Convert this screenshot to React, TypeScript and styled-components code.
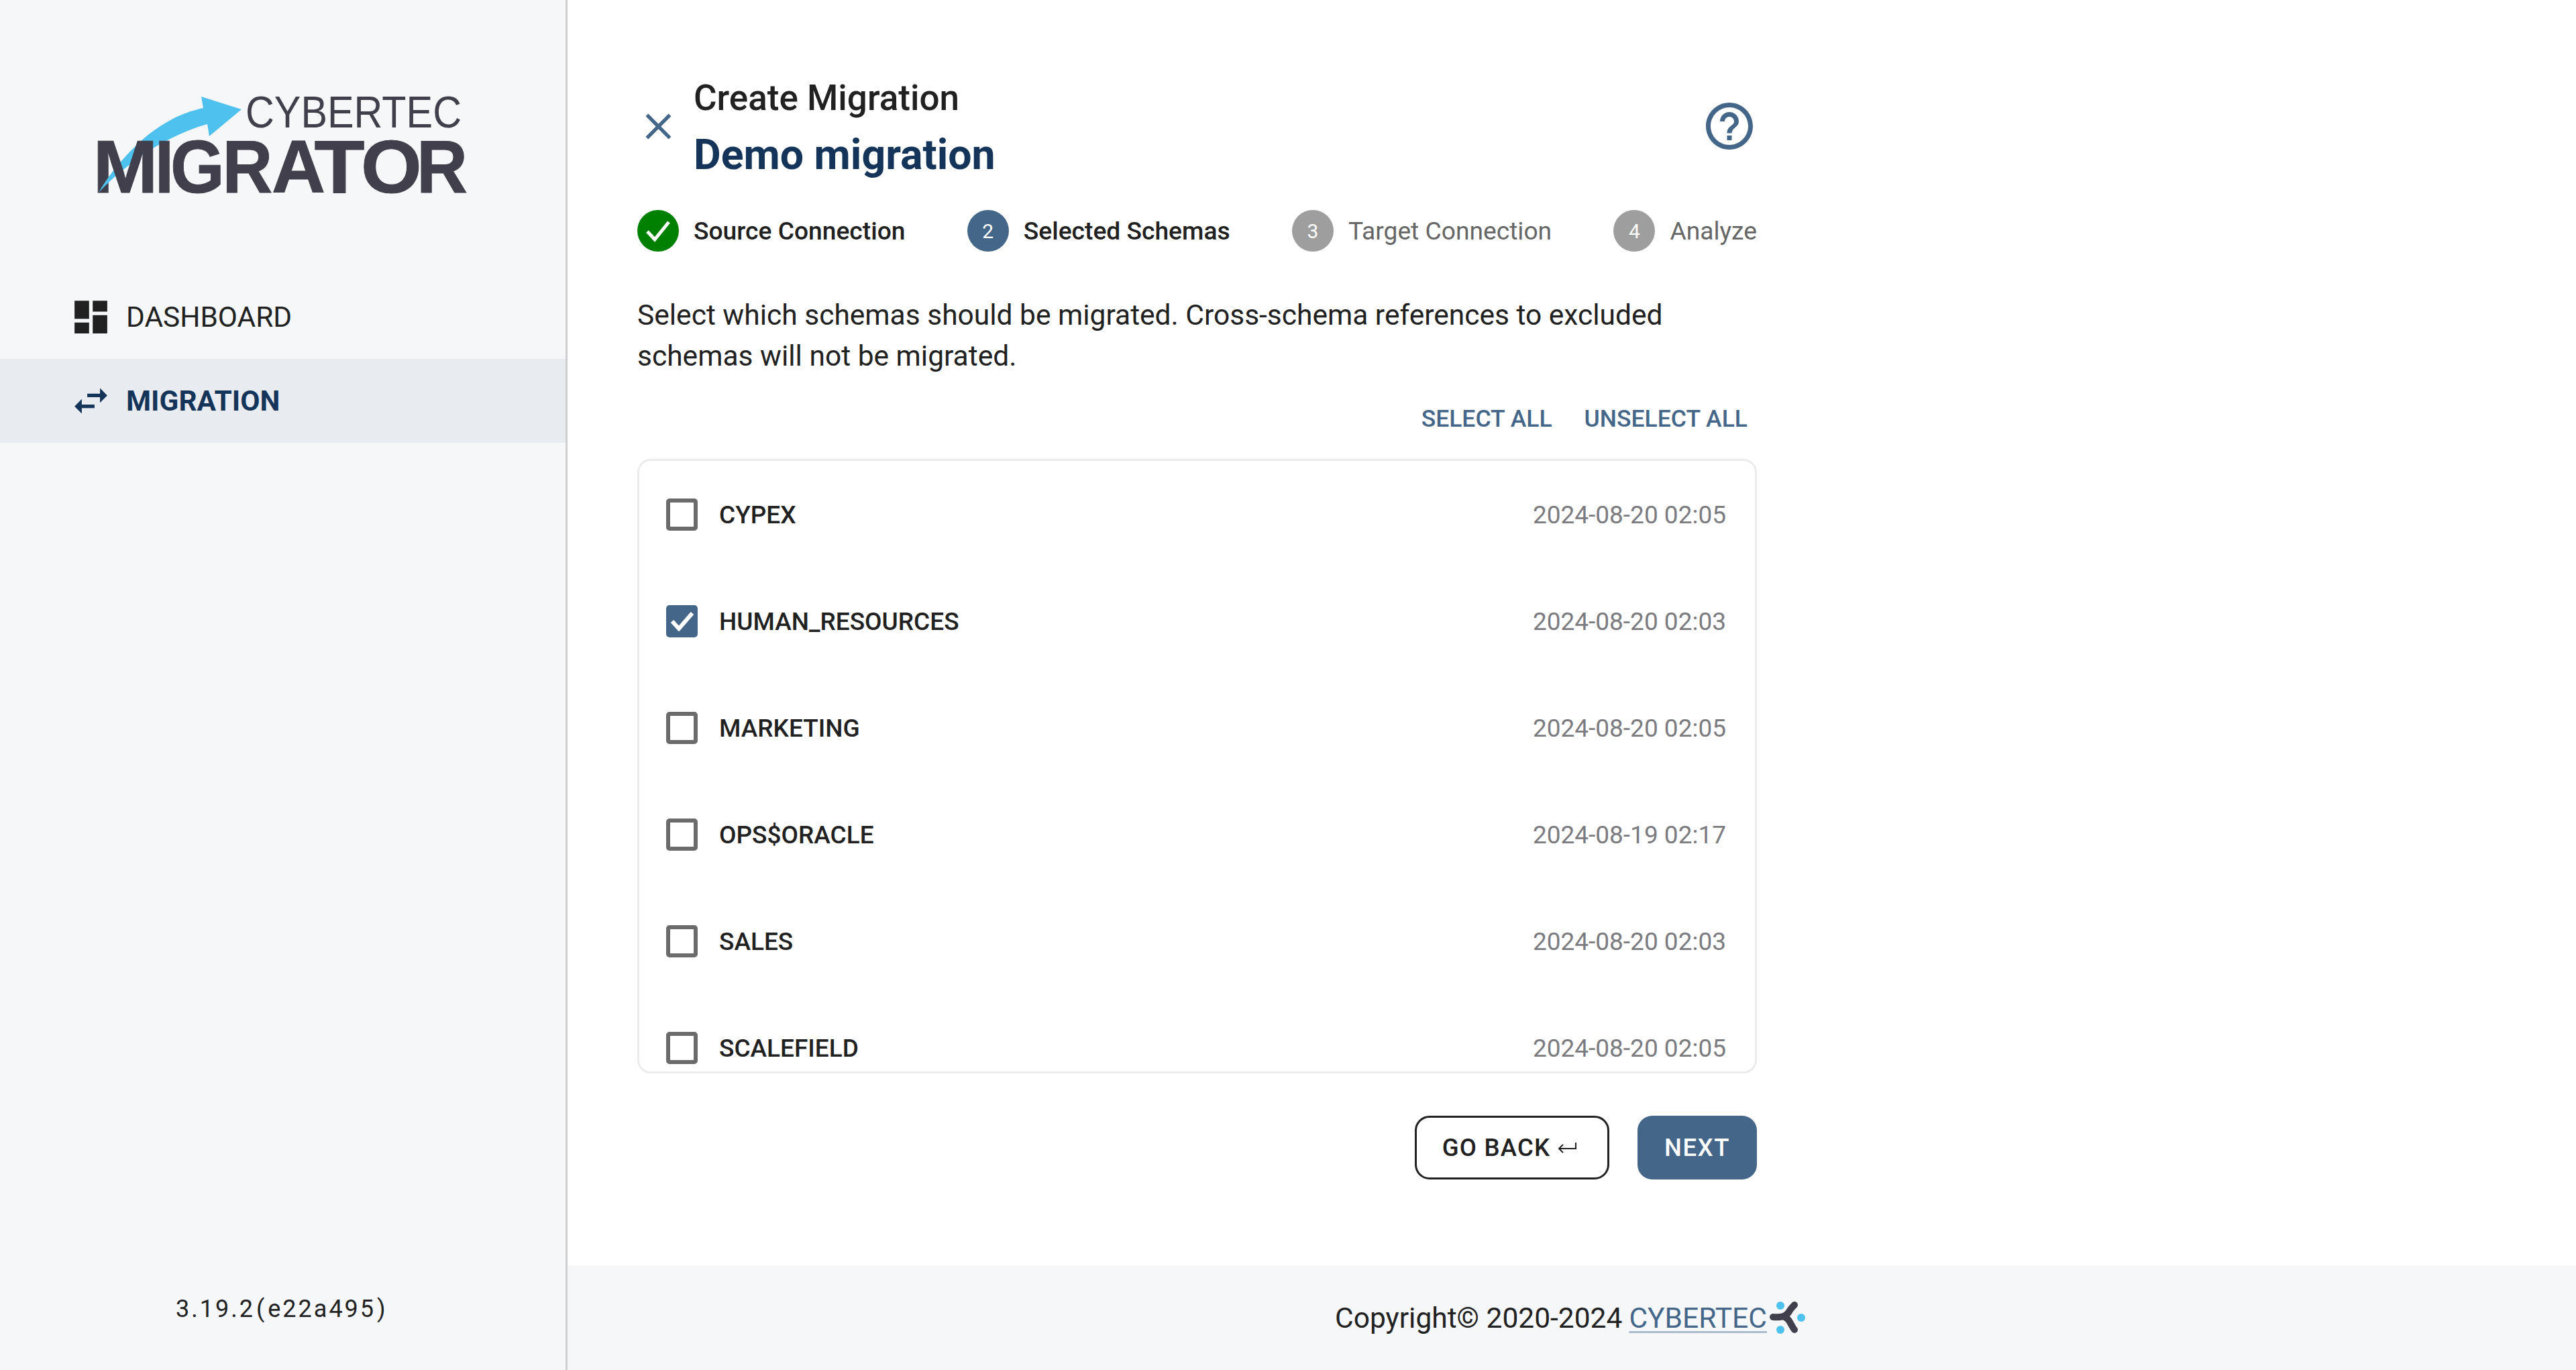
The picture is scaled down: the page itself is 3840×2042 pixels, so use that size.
import styled, { createGlobalStyle } from 'styled-components';

const GlobalStyle = createGlobalStyle`
  html, body {
    margin: 0;
    padding: 0;
    background: #fff;
  }
  body {
    font-family: Roboto, "Liberation Sans", sans-serif;
    color: #212121;
  }
  * {
    box-sizing: border-box;
  }
`;

const Page = styled.div`
  display: flex;
  width: 3840px;
  height: 2042px;
  overflow: hidden;
`;

const Sidebar = styled.aside`
  display: flex;
  flex-direction: column;
  width: 846px;
  flex-shrink: 0;
  background: #f5f7f9;
  border-right: 3px solid #cfcfcf;
`;

const LogoArea = styled.div`
  height: 410px;
  padding: 135px 0 0 130px;
`;

const Nav = styled.nav`
  display: flex;
  flex-direction: column;
  flex: 1;
`;

const NavItem = styled.div<{ $active?: boolean }>`
  display: flex;
  align-items: center;
  gap: 20px;
  height: 125px;
  padding-left: 103px;
  font-size: 42.4px;
  font-weight: ${(p) => (p.$active ? 700 : 400)};
  color: ${(p) => (p.$active ? '#143559' : '#212121')};
  background: ${(p) => (p.$active ? '#e8ebef' : 'transparent')};
`;

const NavIcon = styled.svg`
  width: 65px;
  height: 65px;
  fill: currentColor;
`;

const Version = styled.div`
  height: 112px;
  padding-left: 262px;
  font-size: 36px;
  letter-spacing: 3px;
`;

const Paren = styled.span`
  margin: 0 2px;
`;

const Main = styled.main`
  display: flex;
  flex-direction: column;
  flex: 1;
`;

const Content = styled.div`
  flex: 1;
  padding: 110px 0 0 104px;
`;

const Form = styled.div`
  width: 1669px;
`;

const Header = styled.header`
  display: flex;
  align-items: center;
  height: 156px;
`;

const CloseIcon = styled.svg`
  width: 65px;
  height: 65px;
  margin-left: -1px;
  margin-right: 20px;
  fill: #446689;
  flex-shrink: 0;
`;

const HeaderText = styled.div`
  flex: 1;
  padding-top: 7px;
`;

const Subtitle = styled.div`
  font-size: 53px;
  font-weight: 500;
  line-height: 72px;
`;

const Title = styled.h1`
  margin: 7px 0 0;
  font-size: 62.6px;
  font-weight: 700;
  line-height: 84px;
  color: #143559;
`;

const HelpIcon = styled.svg`
  width: 84px;
  height: 84px;
  margin-right: -1px;
  fill: #446689;
`;

const Stepper = styled.div`
  display: flex;
  justify-content: space-between;
  margin-top: 47px;
`;

const Step = styled.div<{ $pending?: boolean }>`
  display: flex;
  align-items: center;
  gap: 22px;
  font-size: 37.2px;
  font-weight: ${(p) => (p.$pending ? 400 : 500)};
  color: ${(p) => (p.$pending ? '#666' : '#212121')};
`;

const StepCircle = styled.div<{ $color: string }>`
  display: flex;
  align-items: center;
  justify-content: center;
  width: 62px;
  height: 62px;
  border-radius: 50%;
  background: ${(p) => p.$color};
  color: #fff;
  font-size: 30px;
  font-weight: 400;
`;

const Intro = styled.p`
  margin: 64px 0 0;
  font-size: 42.5px;
  line-height: 61px;
`;

const BulkActions = styled.div`
  display: flex;
  justify-content: flex-end;
  gap: 48px;
  margin-top: 39px;
  padding-right: 14px;
`;

const TextButton = styled.span`
  font-size: 35.5px;
  font-weight: 500;
  line-height: 48px;
  color: #446689;
`;

const SchemaList = styled.div`
  height: 916px;
  margin-top: 36px;
  border: 3px solid #ececec;
  border-radius: 20px;
  overflow: hidden;
`;

const SchemaRow = styled.div`
  display: flex;
  align-items: center;
  height: 159px;
  padding: 0 43px 0 40px;
  font-size: 37px;
`;

const CheckBox = styled.span<{ $checked?: boolean }>`
  display: flex;
  align-items: center;
  justify-content: center;
  width: 47px;
  height: 48px;
  margin-right: 32px;
  border-radius: 5px;
  border: ${(p) => (p.$checked ? 'none' : '6px solid #6b6b6b')};
  background: ${(p) => (p.$checked ? '#446689' : 'transparent')};
`;

const SchemaName = styled.span`
  flex: 1;
  padding-top: 2px;
  font-weight: 500;
`;

const SchemaDate = styled.span`
  padding-top: 2px;
  color: #7b7b80;
`;

const Actions = styled.div`
  display: flex;
  justify-content: flex-end;
  gap: 42px;
  margin-top: 63px;
`;

const OutlineButton = styled.button`
  display: flex;
  align-items: center;
  justify-content: center;
  gap: 11px;
  width: 290px;
  height: 95px;
  padding: 0 8px 0 0;
  border: 3px solid #212121;
  border-radius: 22px;
  background: #fff;
  color: #212121;
  font-family: inherit;
  font-size: 36.5px;
  font-weight: 500;
  letter-spacing: 1.2px;
`;

const PrimaryButton = styled.button`
  width: 178px;
  height: 95px;
  padding: 0;
  border: none;
  border-radius: 22px;
  background: #446689;
  color: #fff;
  font-family: inherit;
  font-size: 36.5px;
  font-weight: 500;
  letter-spacing: 1.5px;
`;

const Footer = styled.footer`
  display: flex;
  align-items: center;
  justify-content: center;
  height: 156px;
  padding-right: 4px;
  background: #f5f7f9;
  font-size: 42.5px;
`;

const FooterLink = styled.a`
  margin-left: 10px;
  color: #446689;
  text-decoration: underline;
  text-decoration-color: #a9bacb;
  text-decoration-thickness: 3px;
  text-underline-offset: 5px;
`;

const FooterMark = styled.svg`
  width: 55px;
  height: 48px;
  margin-left: 3px;
`;

// per-letter x and advance, so the logo wordmark keeps its wide proportions
const migratorLetters = [
  { c: 'M', x: 138.5, w: 97 },
  { c: 'I', x: 231, w: 28 },
  { c: 'G', x: 254, w: 80.6 },
  { c: 'R', x: 331.4, w: 74.8 },
  { c: 'A', x: 405, w: 80 },
  { c: 'T', x: 468.5, w: 75 },
  { c: 'O', x: 538, w: 90.7 },
  { c: 'R', x: 621, w: 76 },
];

const ARROW =
  'M147 287C165 255 195 222 222 200C248 180 272 168 303 161L300 144L360 163L312 203L309 185C283 192 255 205 226 222C195 243 170 262 147 287Z';

function Logo() {
  return (
    <svg width="575" height="160" viewBox="130 135 575 160">
      <clipPath id="leg">
        <rect x="140" y="240" width="23.5" height="50" />
      </clipPath>
      <path d={ARROW} fill="#4fc1ef" />
      <text
        x="366"
        y="190"
        fontFamily="Liberation Sans"
        fontSize="67"
        textLength="322"
        lengthAdjust="spacingAndGlyphs"
        fill="#403f4b"
      >
        CYBERTEC
      </text>
      {migratorLetters.map((l, i) => (
        <text
          key={i}
          x={l.x}
          y="286.5"
          fontFamily="Liberation Sans"
          fontWeight="700"
          fontSize="111"
          textLength={l.w}
          lengthAdjust="spacingAndGlyphs"
          fill="#403f4b"
          stroke="#403f4b"
          strokeWidth="1"
        >
          {l.c}
        </text>
      ))}
      <path d={ARROW} fill="#4fc1ef" clipPath="url(#leg)" />
    </svg>
  );
}

const schemas = [
  { name: 'CYPEX', date: '2024-08-20 02:05' },
  { name: 'HUMAN_RESOURCES', date: '2024-08-20 02:03', checked: true },
  { name: 'MARKETING', date: '2024-08-20 02:05' },
  { name: 'OPS$ORACLE', date: '2024-08-19 02:17' },
  { name: 'SALES', date: '2024-08-20 02:03' },
  { name: 'SCALEFIELD', date: '2024-08-20 02:05' },
];

export default function App() {
  return (
    <Page>
      <GlobalStyle />
      <Sidebar>
        <LogoArea>
          <Logo />
        </LogoArea>
        <Nav>
          <NavItem>
            <NavIcon viewBox="0 0 24 24">
              <path d="M3 13h8V3H3v10zm0 8h8v-6H3v6zm10 0h8V11h-8v10zm0-18v6h8V3h-8z" />
            </NavIcon>
            DASHBOARD
          </NavItem>
          <NavItem $active>
            <NavIcon viewBox="0 0 24 24">
              <path d="M6.99 11L3 15l3.99 4v-3H14v-2H6.99v-3zM21 9l-3.99-4v3H10v2h7.01v3L21 9z" />
            </NavIcon>
            MIGRATION
          </NavItem>
        </Nav>
        <Version>
          3.19.2<Paren>(</Paren>e22a495<Paren>)</Paren>
        </Version>
      </Sidebar>
      <Main>
        <Content>
          <Form>
            <Header>
              <CloseIcon viewBox="0 0 24 24">
                <path d="M19 6.41L17.59 5 12 10.59 6.41 5 5 6.41 10.59 12 5 17.59 6.41 19 12 13.41 17.59 19 19 17.59 13.41 12z" />
              </CloseIcon>
              <HeaderText>
                <Subtitle>Create Migration</Subtitle>
                <Title>Demo migration</Title>
              </HeaderText>
              <HelpIcon viewBox="0 0 24 24">
                <path d="M11 18h2v-2h-2v2zm1-16C6.48 2 2 6.48 2 12s4.48 10 10 10 10-4.48 10-10S17.52 2 12 2zm0 18c-4.41 0-8-3.59-8-8s3.59-8 8-8 8 3.59 8 8-3.59 8-8 8zm0-14c-2.21 0-4 1.79-4 4h2c0-1.1.9-2 2-2s2 .9 2 2c0 2-3 1.75-3 5h2c0-2.25 3-2.5 3-5 0-2.21-1.79-4-4-4z" />
              </HelpIcon>
            </Header>
            <Stepper>
              <Step>
                <StepCircle $color="#008000">
                  <svg width="40" height="34" viewBox="0 0 40 34">
                    <path d="M4 18L15 30L36 4" fill="none" stroke="#fff" strokeWidth="5" />
                  </svg>
                </StepCircle>
                Source Connection
              </Step>
              <Step>
                <StepCircle $color="#446689">2</StepCircle>
                Selected Schemas
              </Step>
              <Step $pending>
                <StepCircle $color="#9e9e9e">3</StepCircle>
                Target Connection
              </Step>
              <Step $pending>
                <StepCircle $color="#9e9e9e">4</StepCircle>
                Analyze
              </Step>
            </Stepper>
            <Intro>
              Select which schemas should be migrated. Cross-schema references to excluded schemas will not be migrated.
            </Intro>
            <BulkActions>
              <TextButton>SELECT ALL</TextButton>
              <TextButton>UNSELECT ALL</TextButton>
            </BulkActions>
            <SchemaList>
              {schemas.map((s) => (
                <SchemaRow key={s.name}>
                  <CheckBox $checked={s.checked}>
                    {s.checked && (
                      <svg width="36" height="30" viewBox="0 0 36 30">
                        <path d="M3 15L13 26L33 3" fill="none" stroke="#fff" strokeWidth="6" />
                      </svg>
                    )}
                  </CheckBox>
                  <SchemaName>{s.name}</SchemaName>
                  <SchemaDate>{s.date}</SchemaDate>
                </SchemaRow>
              ))}
            </SchemaList>
            <Actions>
              <OutlineButton>
                GO BACK
                <svg width="28" height="18" viewBox="0 0 28 18">
                  <path d="M27 1V10H2M8 4L2 10L8 16" fill="none" stroke="#212121" strokeWidth="2" />
                </svg>
              </OutlineButton>
              <PrimaryButton>NEXT</PrimaryButton>
            </Actions>
          </Form>
        </Content>
        <Footer>
          Copyright© 2020-2024
          <FooterLink>CYBERTEC</FooterLink>
          <FooterMark viewBox="7 10 55 48">
            <path
              d="M13 33C24 34 32 33 37 25C39 21 42 18 45 15M30 33C36 35 38 40 40 44C42 47 43 50 45 52"
              fill="none"
              stroke="#403f4b"
              strokeWidth="10"
              strokeLinecap="round"
            />
            <circle cx="24" cy="16" r="6" fill="#4fc1ef" />
            <circle cx="24" cy="52" r="6" fill="#4fc1ef" />
            <circle cx="55" cy="34" r="6" fill="#4fc1ef" />
          </FooterMark>
        </Footer>
      </Main>
    </Page>
  );
}
